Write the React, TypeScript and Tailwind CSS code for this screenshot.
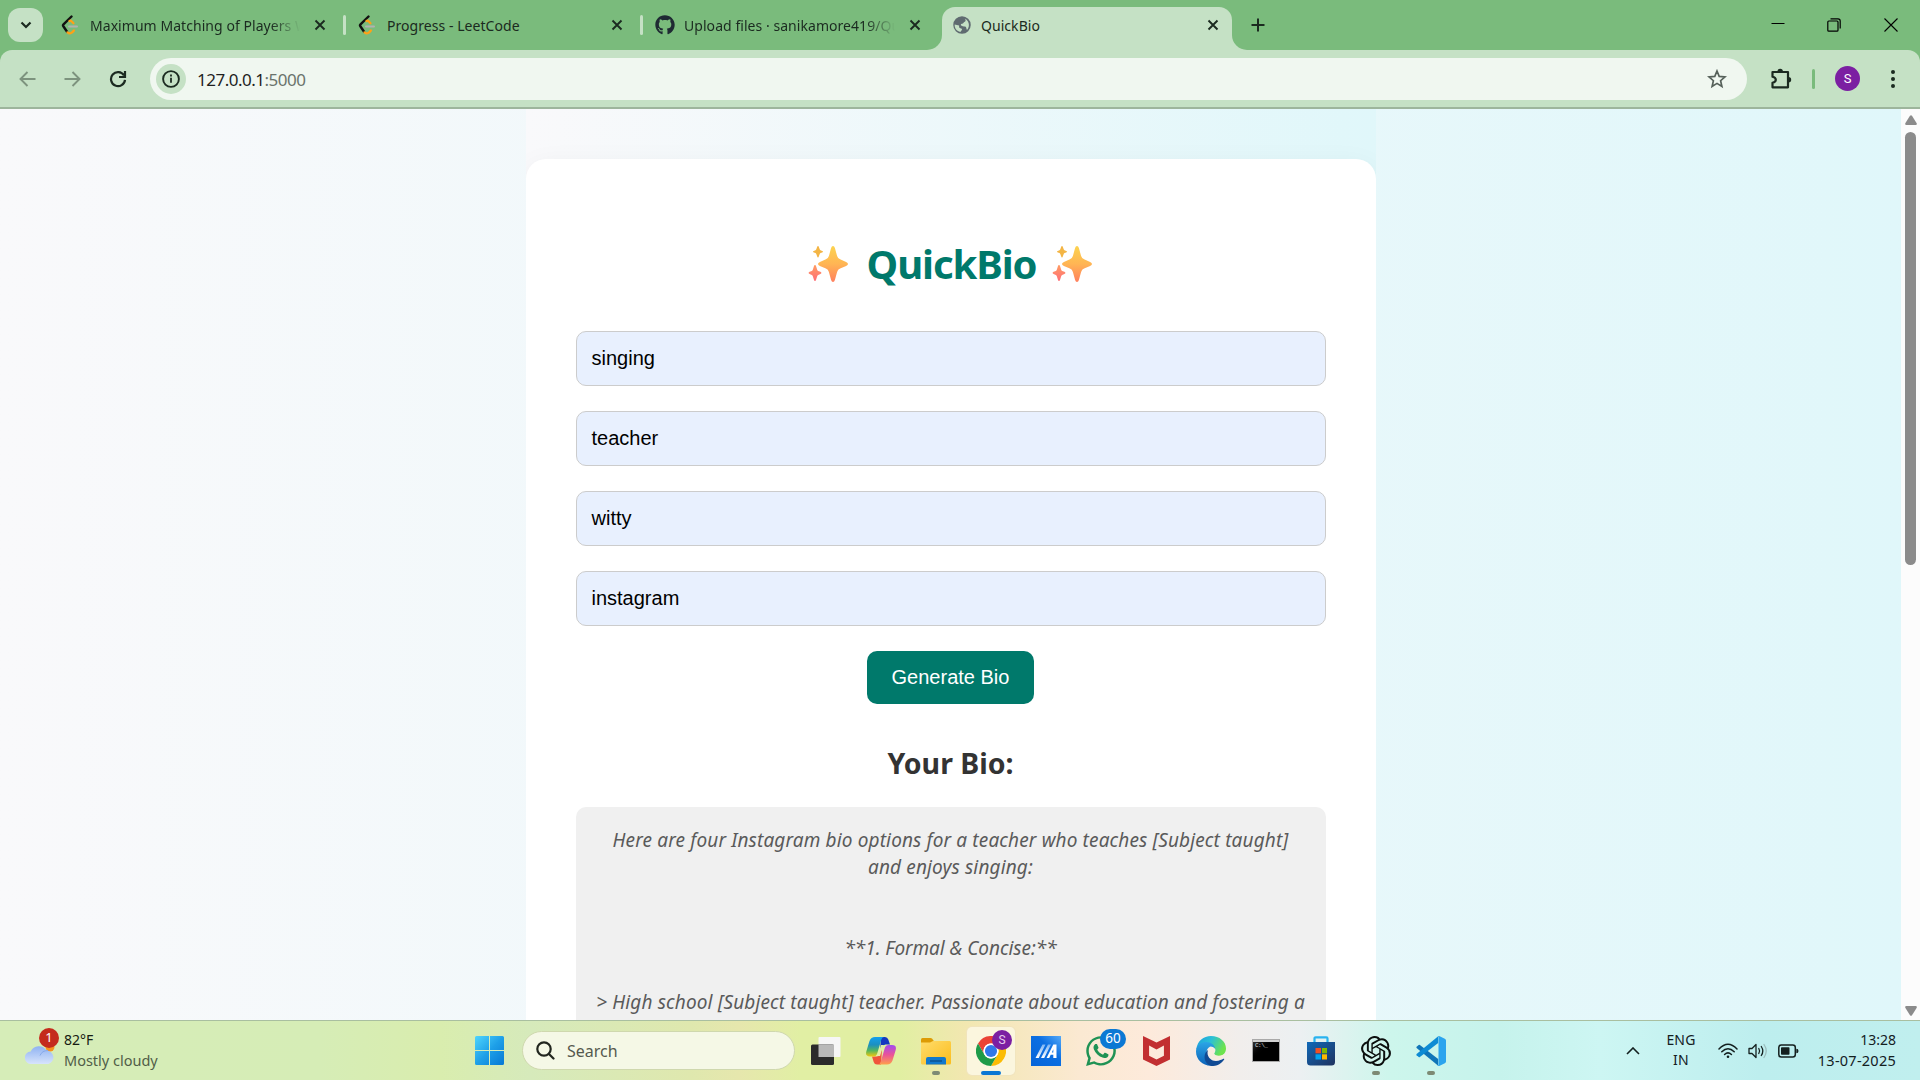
import React from "react";
import { FaGithub, FaWhatsapp } from "react-icons/fa";
import { SiOpenai } from "react-icons/si";

function LeetIcon() {
  return (
    <svg width="18" height="20" viewBox="0 0 18 20" fill="none" strokeLinecap="round" strokeLinejoin="round" className="-ml-[2px]">
      <path d="M10.5 1.5 2.5 9.3q-1 1 0 2.2l3.4 5" stroke="#111" strokeWidth="2.4" />
      <path d="M8.500 6q1-.7 2 .3l2 2" stroke="#ffa116" strokeWidth="2.2" />
      <path d="M6.500 17.300q3.200 2.800 6.400-1.800" stroke="#ffa116" strokeWidth="2.2" />
      <path d="M8 11.500h8" stroke="#b3b1b0" strokeWidth="2" />
    </svg>
  );
}

function Cross() {
  return (
    <svg width="12" height="12" viewBox="0 0 12 12" stroke="#1b2a20" strokeWidth="1.9" className="shrink-0">
      <path d="M1.500 1.500l9 9M10.500 1.500l-9 9" />
    </svg>
  );
}

function Globe() {
  return (
    <svg width="20" height="20" viewBox="0 0 24 24" fill="#5f6b70">
      <path d="M12 1.500a10.500 10.500 0 1 0 0 21 10.500 10.500 0 0 0 0-21zM10 20.300c-4.200-.9-7-4-6.800-8.800l5.300 1.100v2c1.100 1.800 3.500.8 3.500 3.200zm8-2.200c-1-1.700-.4-3.800-2.300-4.300-1.200-.4-4.500-.3-5-1.600-.5-2.300 2.300-1.100 3-2.500.3-1.500 1.600-1.200 2.300-2.200.8-1.200.1-2.500-.9-3.300 5 1.800 7.300 9.200 2.900 13.900z" />
    </svg>
  );
}

function Sparkles({ id }: { id: string }) {
  return (
    <svg width="41" height="38" viewBox="0 0 41 38">
      <defs>
        <linearGradient id={id} x1="0" y1="0" x2="0" y2="1">
          <stop offset="0" stopColor="#fcd34f" />
          <stop offset=".5" stopColor="#ffb554" />
          <stop offset="1" stopColor="#ff7f5e" />
        </linearGradient>
        <linearGradient id={id + "p"} x1="0" y1="0" x2="0" y2="1">
          <stop offset="0" stopColor="#ff9c62" />
          <stop offset="1" stopColor="#ff6f78" />
        </linearGradient>
      </defs>
      <path fill={`url(#${id})`} d="M25 1q1.300 0 1.900 2l2.200 8q.7 2.400 3 3.300l6 2.600q1.900.8 1.900 2t-1.900 2l-6 2.700q-2.300.9-3 3.300l-2.200 8q-.6 2.100-1.900 2.100t-1.900-2.100l-2.200-8q-.7-2.400-3-3.300l-6-2.700q-1.900-.8-1.900-2t1.900-2l6-2.600q2.300-.9 3-3.300l2.200-8q.6-2 1.900-2z" />
      <path fill="#f3b545" d="M10 1q.6 0 .8.800l.9 2.500q.2.700.8 1l1.700.7q.8.300.8.700t-.8.700l-1.700.7q-.6.300-.8 1l-.9 2.500q-.2.900-.8.900t-.8-.9l-.9-2.500q-.2-.7-.8-1l-1.700-.7Q5 7.100 5 6.700t.8-.7l1.700-.7q.6-.3.800-1l.9-2.500q.2-.8.8-.8z" />
      <path fill={`url(#${id}p)`} d="M7 20q.8 0 1 1l1.200 3.700q.2.800 1 1.200l2.200.9q1 .5 1 1.200t-1 1.100l-2.200.9q-.8.400-1 1.200L8 35q-.2 1-1 1t-1-1l-1.200-3.800q-.2-.8-1-1.200l-2.200-.9q-1-.4-1-1.100t1-1.200l2.200-.9q.8-.4 1-1.200L6 21q.2-1 1-1z" />
    </svg>
  );
}

function Tab({ icon, title, width, fade }: { icon: React.ReactNode; title: string; width: string; fade?: boolean }) {
  return (
    <div className={"flex items-center " + width}>
      <div className="flex w-[22px] shrink-0 justify-center">{icon}</div>
      <div
        className={
          "ml-[8px] min-w-0 flex-1 overflow-hidden whitespace-nowrap " +
          (fade ? "[mask-image:linear-gradient(to_right,black_86%,transparent)]" : "")
        }
      >
        {title}
      </div>
      <div className="ml-[14px] mr-[2px] flex shrink-0">
        <Cross />
      </div>
    </div>
  );
}

function TabStrip() {
  return (
    <div className="flex h-[50px] shrink-0 items-center bg-[#7abb7c] text-[14px] tracking-[0.05px] text-[#1b2a20]">
      <div className="ml-[8px] flex h-[34px] w-[35px] shrink-0 items-center justify-center rounded-[12px] bg-[#c5e1c5]">
        <svg width="12" height="8" viewBox="0 0 12 8" fill="none" stroke="#1b2a20" strokeWidth="2.2">
          <path d="M1.500 1.500L6 6l4.500-4.500" />
        </svg>
      </div>
      <div className="ml-[17px] flex">
        <Tab icon={<LeetIcon />} title="Maximum Matching of Players With" width="w-[268px]" fade />
      </div>
      <div className="ml-[15px] h-[20px] w-[3px] rounded bg-[#c5e1c5]" />
      <div className="ml-[11px] flex">
        <Tab icon={<LeetIcon />} title="Progress - LeetCode" width="w-[268px]" />
      </div>
      <div className="ml-[15px] h-[20px] w-[3px] rounded bg-[#c5e1c5]" />
      <div className="ml-[11px] flex">
        <Tab icon={<FaGithub size={20} color="#1f2a33" />} title="Upload files · sanikamore419/Quick" width="w-[269px]" fade />
      </div>
      <div className="ml-[4px] flex h-full items-end">
        <div className="h-[15px] w-[15px] bg-[#c5e1c5]">
          <div className="h-full w-full rounded-br-[15px] bg-[#7abb7c]" />
        </div>
        <div className="flex h-[43px] w-[290px] items-center rounded-t-[13px] bg-[#c5e1c5] pb-[7px] pl-[9px] pr-[11px]">
          <Tab icon={<Globe />} title="QuickBio" width="w-full" />
        </div>
        <div className="h-[15px] w-[15px] bg-[#c5e1c5]">
          <div className="h-full w-full rounded-bl-[15px] bg-[#7abb7c]" />
        </div>
      </div>
      <svg width="14" height="14" viewBox="0 0 14 14" stroke="#1b2a20" strokeWidth="2" className="ml-[4px]">
        <path d="M7 .5v13M.5 7h13" />
      </svg>
      <div className="ml-auto flex items-center pr-[22px] text-black">
        <svg width="14" height="14" viewBox="0 0 14 14" stroke="currentColor" className="mr-[42px]">
          <path d="M.5 5.500h13" />
        </svg>
        <svg width="14" height="14" viewBox="0 0 14 14" fill="none" stroke="currentColor" strokeWidth="1.200" className="mr-[43px]">
          <rect x=".8" y="3" width="10.200" height="10.200" rx="1" />
          <path d="M3.500 .8h7.500q2.200 0 2.200 2.200v7.500" />
        </svg>
        <svg width="14" height="14" viewBox="0 0 14 14" stroke="currentColor" strokeWidth="1.100">
          <path d="M.5.5l13 13M13.500.5l-13 13" />
        </svg>
      </div>
    </div>
  );
}

function Toolbar() {
  return (
    <div className="bg-[#7abb7c]">
      <div className="flex h-[59px] items-center rounded-t-[12px] border-b-2 border-[#9db59c] bg-[#c5e1c5] pl-[19px] pr-[24px]">
        <svg width="17" height="16" viewBox="0 0 17 16" fill="none" stroke="#7d937e" strokeWidth="1.900">
          <path d="M16.500 8H1.800M8.500 1L1.500 8l7 7" />
        </svg>
        <svg width="17" height="16" viewBox="0 0 17 16" fill="none" stroke="#7d937e" strokeWidth="1.900" className="ml-[28px]">
          <path d="M.5 8h14.700M8.500 1l7 7-7 7" />
        </svg>
        <svg width="18" height="18" viewBox="0 0 18 18" fill="none" stroke="#1b2a20" strokeWidth="2.200" className="ml-[28px]">
          <path d="M15 5.500A7 7 0 1 0 16 9.800" />
          <path d="M16 1v6h-6" />
        </svg>
        <div className="ml-[23px] flex h-[42px] w-[1597px] items-center rounded-full bg-[#f0f7f0] pl-[6px] pr-[20px]">
          <div className="flex h-[30px] w-[30px] items-center justify-center rounded-full bg-[#c5e1c5]">
            <svg width="18" height="18" viewBox="0 0 18 18" fill="none" stroke="#1b2a20" strokeWidth="1.900">
              <circle cx="9" cy="9" r="7.900" />
              <path d="M9 7.800v5M9 4.600v2" strokeWidth="1.800" />
            </svg>
          </div>
          <div className="ml-[11px] pt-[2px] text-[17px] tracking-[-0.5px] text-[#1f1f1f]">
            127.0.0.1<span className="text-[#6a736c]">:5000</span>
          </div>
          <svg width="20" height="20" viewBox="0 0 20 20" fill="none" stroke="#56615a" strokeWidth="1.700" className="ml-auto">
            <path d="M10 2l2.200 5.400 5.800.5-4.400 3.800 1.300 5.700L10 14.400l-4.900 3 1.300-5.700L2 7.900l5.800-.5z" />
          </svg>
        </div>
        <svg width="22" height="22" viewBox="0 0 22 22" className="ml-[23px]">
          <path d="M2.500 4h15.500v15.300H2.500v-4.600c4.400-1 4.400-5 0-6z" fill="none" stroke="#1b2a20" strokeWidth="2.200" strokeLinejoin="round" />
          <path d="M7.500 3.500a2.700 2.700 0 0 1 5.400 0zM18.500 9a2.700 2.700 0 0 1 0 5.400z" fill="#1b2a20" />
        </svg>
        <div className="ml-[20px] h-[20px] w-[3px] rounded bg-[#7abb7c]" />
        <div className="ml-[20px] flex h-[25px] w-[25px] items-center justify-center rounded-full bg-[#7b1fa2] font-[Roboto] text-[13px] text-white">S</div>
        <div className="ml-auto flex w-[6px] flex-col items-center gap-[3px]">
          <div className="h-[4px] w-[4px] rounded-full bg-[#1b2a20]" />
          <div className="h-[4px] w-[4px] rounded-full bg-[#1b2a20]" />
          <div className="h-[4px] w-[4px] rounded-full bg-[#1b2a20]" />
        </div>
      </div>
    </div>
  );
}

const fields = ["singing", "teacher", "witty", "instagram"];

function Page() {
  return (
    <div className="flex h-[911px] shrink-0 overflow-hidden">
      <div className="flex w-[1901px] justify-center bg-linear-to-r from-[#f9f9fb] to-[#e0f7fa]">
        <div className="h-[911px] w-[850px] overflow-hidden bg-linear-to-r from-[#f9f9fb] to-[#e0f7fa] pt-[50px]">
          <div className="flex h-[1200px] flex-col items-center rounded-t-[20px] bg-white px-[50px] pt-[76px] shadow-[0_8px_30px_rgba(0,0,0,0.06)]">
            <h1 className="flex h-[60px] items-center pb-[2px] text-[40px] font-bold tracking-[-1.1px] text-[#00796b]">
              <Sparkles id="sparkA" />
              <span className="ml-[18px] mr-[16px]">QuickBio</span>
              <Sparkles id="sparkB" />
            </h1>
            <div className="mt-[36px] flex w-full flex-col gap-[25px]">
              {fields.map((f) => (
                <div key={f} className="flex h-[55px] items-center rounded-[10px] border border-[#ccc] bg-[#e8f0fe] px-[15px] pb-[2px] font-['Liberation_Sans'] text-[20px] text-black">
                  {f}
                </div>
              ))}
            </div>
            <button className="mt-[25px] h-[53px] w-[167px] shrink-0 rounded-[10px] bg-[#00796b] pb-[2px] font-['Liberation_Sans'] text-[20px] text-white">Generate Bio</button>
            <h2 className="mt-[39px] h-[40px] shrink-0 text-[28.500px] leading-[40px] font-bold text-[#333]">Your Bio:</h2>
            <div className="mt-[24px] h-[400px] w-full shrink-0 rounded-[10px] bg-[#f0f0f0] pt-[20px] text-center text-[19px] leading-[27px] tracking-[0.14px] whitespace-nowrap text-[#5a5a5a] italic">
              <p>Here are four Instagram bio options for a teacher who teaches [Subject taught]</p>
              <p>and enjoys singing:</p>
              <p className="mt-[54px] tracking-[-0.05px]">**1. Formal &amp; Concise:**</p>
              <p className="mt-[27px]">&gt; High school [Subject taught] teacher. Passionate about education and fostering a</p>
            </div>
          </div>
        </div>
      </div>
      <div className="flex w-[19px] flex-col items-center bg-[#fcfcfc] pt-[6px] pb-[4px]">
        <svg width="12" height="10" viewBox="0 0 12 10" fill="#8b8b8b"><path d="M5 .8q1-1.200 2 0l4.700 7.500q.5 1.700-1 1.700H1.300q-1.500 0-1-1.700z" /></svg>
        <div className="mt-[7px] h-[433px] w-[11px] rounded-full bg-[#8b8b8b]" />
        <svg width="12" height="10" viewBox="0 0 12 10" fill="#8b8b8b" className="mt-auto"><path d="M5 9.200q1 1.200 2 0l4.700-7.500q.5-1.700-1-1.700H1.300q-1.500 0-1 1.700z" /></svg>
      </div>
    </div>
  );
}

function WinLogo() {
  return (
    <svg width="29" height="29" viewBox="0 0 29 29">
      <defs>
        <linearGradient id="win" x1="0" y1="0" x2="1" y2="1" gradientUnits="objectBoundingBox">
          <stop offset="0" stopColor="#4fd5fc" />
          <stop offset=".5" stopColor="#1ea0e8" />
          <stop offset="1" stopColor="#0678d4" />
        </linearGradient>
      </defs>
      <path fill="url(#win)" d="M1.500 0H14v14H0V1.500Q0 0 1.500 0zM15 0h12.500Q29 0 29 1.500V14H15zM0 15h14v14H1.500Q0 29 0 27.500zM15 15h14v12.500q0 1.500-1.500 1.500H15z" />
    </svg>
  );
}

function TaskView() {
  return (
    <svg width="30" height="30" viewBox="0 0 30 30">
      <rect x="7.500" y="1" width="22" height="20" rx="1" fill="#f6f6f6" />
      <rect x="0" y="8.500" width="23" height="20.500" rx="1.500" fill="#2b2b2b" />
      <path d="M7.500 8.500H23V21H7.500z" fill="#b9b9b9" />
    </svg>
  );
}

function Copilot() {
  return (
    <svg width="30" height="28" viewBox="0 0 30 28">
      <defs>
        <linearGradient id="cpA" x1="0" y1="0" x2="0" y2="1">
          <stop offset="0" stopColor="#12a0ee" />
          <stop offset=".4" stopColor="#1c8fc0" />
          <stop offset=".7" stopColor="#55b65c" />
          <stop offset="1" stopColor="#f2c80f" />
        </linearGradient>
        <linearGradient id="cpB" x1="0" y1="0" x2="0" y2="1">
          <stop offset="0" stopColor="#a24cf0" />
          <stop offset=".5" stopColor="#ea5398" />
          <stop offset="1" stopColor="#ffa04a" />
        </linearGradient>
      </defs>
      <path d="M15 0h4q2.500 0 3.300 2.500L24 7.500h-4.500q-2.500 0-3.300 2.500L14 14z" fill="#1438c0" />
      <path d="M15 27.500h-4q-2.500 0-3.300-2.500L6 19.500h4.500q2.500 0 3.300-2.500L16 12z" fill="#f0543a" />
      <path d="M9 0h9q-2 0-2.800 3l-4 13.500q-.9 3-3.700 3H4q-5 0-3.700-5L3.500 4Q5 0 9 0z" fill="url(#cpA)" />
      <path d="M21 27.500h-9q2 0 2.800-3l4-13.500q.9-3 3.700-3H26q5 0 3.700 5l-3.200 10.500q-1.500 4-5.500 4z" fill="url(#cpB)" />
      <path d="M15 8h3.300q-1.300.8-1.800 2.700l-2.400 8.300h-3.300q1.300-.9 1.800-2.700z" fill="#e3eda8" />
    </svg>
  );
}

function Folder() {
  return (
    <svg width="30" height="28" viewBox="0 0 30 28">
      <defs>
        <linearGradient id="fol" x1="0" y1="0" x2="1" y2="1">
          <stop offset="0" stopColor="#ffdc6b" />
          <stop offset="1" stopColor="#fbbd1d" />
        </linearGradient>
      </defs>
      <path d="M0 6V2.500Q0 1 1.500 1h8q1 0 1.700.8L13 4.300 10 7z" fill="#dd9b05" />
      <path d="M0 5.500h9L12 4h16.500Q30 4 30 5.500V26q0 1.500-1.500 1.500h-27Q0 27.500 0 26z" fill="url(#fol)" />
      <path d="M5 27.500V22q0-2 2-2h16q2 0 2 2v5.500z" fill="#1279cc" />
      <path d="M9 24h12" stroke="#0a4c8a" strokeWidth="1.300" />
    </svg>
  );
}

function Chrome() {
  return (
    <svg width="30" height="30" viewBox="0 0 48 48">
      <circle cx="24" cy="24" r="24" fill="#fff" />
      <path d="M3.200 12A24 24 0 0 1 44.800 12H24a12 12 0 0 0-10.400 18z" fill="#ea4335" />
      <path d="M44.800 12A24 24 0 0 1 24 48l10.400-18A12 12 0 0 0 24 12z" fill="#fbbc04" />
      <path d="M24 48A24 24 0 0 1 3.200 12l10.400 18a12 12 0 0 0 20.800 0z" fill="#1e9b48" />
      <circle cx="24" cy="24" r="12" fill="#fff" />
      <circle cx="24" cy="24" r="9.700" fill="#2f78ea" />
    </svg>
  );
}

function MyAsus() {
  return (
    <svg width="30" height="30" viewBox="0 0 30 30">
      <defs>
        <linearGradient id="asus" x1="0" y1="1" x2="1" y2="0">
          <stop offset="0" stopColor="#0664d8" />
          <stop offset=".6" stopColor="#0b6fe2" />
          <stop offset="1" stopColor="#55aaf8" />
        </linearGradient>
        <linearGradient id="slash" x1="0" y1="1" x2="0" y2="0">
          <stop offset="0" stopColor="#fff" />
          <stop offset="1" stopColor="#7db4f3" />
        </linearGradient>
      </defs>
      <path d="M0 0h30v30H0z" fill="url(#asus)" />
      <path d="M4.500 22L11.500 8.500h3L7.700 22zM10 22l7-13.500h3L13.200 22z" fill="url(#slash)" />
      <path d="M15.500 22L22.300 8.500h3.200V22h-3.200v-3.200h-2.600L18.200 22zM20.800 16.400h1.500v-3.200z" fill="#fff" />
    </svg>
  );
}

function McAfee() {
  return (
    <svg width="27" height="30" viewBox="0 0 28 30" preserveAspectRatio="none">
      <path d="M0 0l14 6.500L28 0v23.500L14 30 0 23.500zM6.300 9.500v10.200L14 23.500l7.700-3.800V9.500L14 13.500z" fill="#c22f31" fillRule="evenodd" />
    </svg>
  );
}

function Edge() {
  return (
    <svg width="30" height="30" viewBox="0 0 30 30">
      <defs>
        <linearGradient id="edA" x1="0" y1="0" x2="1" y2=".4">
          <stop offset="0" stopColor="#1a9de0" />
          <stop offset=".5" stopColor="#2cc0d6" />
          <stop offset="1" stopColor="#6de34e" />
        </linearGradient>
        <linearGradient id="edB" x1="0" y1="0" x2="0" y2="1">
          <stop offset="0" stopColor="#2ba5e6" />
          <stop offset="1" stopColor="#0c62b8" />
        </linearGradient>
      </defs>
      <path d="M.3 13C1.500 5 7.500 0 15 0c8.500 0 15 5.500 15 12.500 0 4.500-3 7.500-7.500 7.500-3.500 0-5-1.500-4-3 2.500-4-.5-7-5-7C7 10 2 14 .3 13z" fill="url(#edA)" />
      <path d="M0 15.500C0 10 4.500 6 10 6c5 0 9 3 9 7-1-2-3.500-3-5.500-2-3 1.500-4.500 7-1 12 2 3 5 5.500 7.500 6C9 32 0 25 0 15.500z" fill="url(#edB)" />
      <path d="M12 14c-2 6 2.500 11 8 11 3.500 0 6-1.500 7.300-2.200.8-.3 1.200.3.700 1C25.500 27.500 21.500 30 17 30 9 30 5.500 19 12 14z" fill="#104a94" />
      <path d="M15 11.500c2.500-.5 4.300 1.300 4 3.300-.2 1.500-1.300 2-.9 3 .6 1.300 2.400 2 4.700 2 2.200 0 4-.6 5.700-2-.6 2-1.500 3.700-2.600 4.700-6 3.200-12.700.3-13.200-6-.1-2.500.8-4.500 2.300-5z" fill="#f9ece0" />
    </svg>
  );
}

function Cmd() {
  return (
    <div className="flex h-[23px] w-[28px] flex-col border border-[#a9a9a9] bg-linear-to-br from-[#3a3a3a] to-black to-50%">
      <div className="h-[2px] shrink-0 bg-[#d0d0d0]" />
      <div className="pl-[2px] font-['Liberation_Mono'] text-[6px] leading-[8px] tracking-[-0.5px] text-[#ddd]">C:\_</div>
    </div>
  );
}

function Store() {
  return (
    <svg width="30" height="30" viewBox="0 0 30 30">
      <defs>
        <linearGradient id="sto" x1="0" y1="0" x2="1" y2="1">
          <stop offset="0" stopColor="#0f69b8" />
          <stop offset="1" stopColor="#20325f" />
        </linearGradient>
      </defs>
      <path d="M8.500 8V2.500q0-1.200 1.200-1.200h10.600q1.200 0 1.200 1.200V8" fill="none" stroke="#28b3ef" strokeWidth="2.200" />
      <path d="M1 6h28v20q0 3.500-3.500 3.500h-21Q1 29.500 1 26z" fill="url(#sto)" />
      <path d="M9.500 12H15v5.300H9.500z" fill="#f25022" />
      <path d="M16 12h5v5.300h-5z" fill="#7fba00" />
      <path d="M9.500 18.300H15v5.200H9.500z" fill="#00a4ef" />
      <path d="M16 18.300h5v5.200h-5z" fill="#ffb900" />
    </svg>
  );
}

function VsCode() {
  return (
    <svg width="30" height="30" viewBox="0 0 100 100">
      <path d="M2 36l7-6q2-1.500 4 0l61 47v22L2 40q-2-2 0-4z" fill="#1075b8" />
      <path d="M2 64l7 6q2 1.500 4 0l61-47V1L2 60q-2 2 0 4z" fill="#0d8bd4" />
      <path d="M70 99q5 2 9 0l17-8q4-2 4-6V15q0-4-4-6L79 1q-5-2-9 1 5-3 5 3v90q0 6-5 4z" fill="#2ba4ee" />
    </svg>
  );
}

function DockItem({ children, running, active }: { children: React.ReactNode; running?: boolean; active?: boolean }) {
  return (
    <div
      className={
        "relative flex h-[48px] w-[48px] shrink-0 items-center justify-center rounded-[5px] " +
        (active ? "bg-[#fbf6de] shadow-[0_0_0_1px_rgba(240,228,190,0.8)]" : "")
      }
    >
      {children}
      {running && <div className="absolute bottom-0 left-[20px] h-[4px] w-[8px] rounded-full bg-[#7d8a74]" />}
      {active && <div className="absolute bottom-0 left-[14px] h-[4px] w-[20px] rounded-full bg-[#0b78d4]" />}
    </div>
  );
}

function Taskbar() {
  return (
    <div className="flex h-[60px] shrink-0 items-center border-t border-[#a9bfa0] bg-[linear-gradient(90deg,#d6edb8_0px,#d6edb6_320px,#d9edae_440px,#d6eabb_530px,#dfe8ae_690px,#e6e7ad_740px,#e1efa4_800px,#e1efa2_900px,#f2e7b0_965px,#fbe9d2_1080px,#fdeadb_1150px,#f1eeec_1240px,#ecf0f2_1300px,#cdf6ec_1390px,#c6f3ec_1500px,#cdf6f3_1600px,#bdeeee_1760px,#c0efee_1920px)]">
      <div className="flex w-[465px] shrink-0 items-center pl-[25px]">
        <div className="relative h-[44px] w-[36px] shrink-0">
          <svg width="31" height="21" viewBox="0 0 31 21" className="absolute top-[15px] left-0">
            <defs>
              <linearGradient id="cld" x1="0" y1="0" x2="0" y2="1">
                <stop offset="0" stopColor="#8fb2f2" />
                <stop offset="1" stopColor="#d7e4fb" />
              </linearGradient>
            </defs>
            <circle cx="25" cy="3" r="4.500" fill="#f7931e" />
            <path d="M6.500 20a6.300 6.300 0 0 1-.8-12.600A9 9 0 0 1 21.500 6.500a6.900 6.900 0 0 1 2 13.500z" fill="url(#cld)" />
            <path d="M15 11.500q2-5 8-5" stroke="#86a9ea" strokeWidth="1" fill="none" />
          </svg>
          <div className="absolute -top-[1px] left-[14px] flex h-[20px] w-[20px] items-center justify-center rounded-full bg-[#c42b1c] text-[13px] text-white">1</div>
        </div>
        <div className="ml-[3px] pb-[2px] text-[14px] leading-[20px] text-[#161b12]">
          <div>82°F</div>
          <div className="text-[14.500px] text-[#515d48]">Mostly cloudy</div>
        </div>
      </div>
      <DockItem><WinLogo /></DockItem>
      <div className="ml-[9px] mr-[7px] flex h-[39px] w-[273px] shrink-0 items-center rounded-full border border-[#cfd8ae] bg-[#f5f8e6] pl-[13px]">
        <svg width="19" height="19" viewBox="0 0 19 19" fill="none" stroke="#22261f" strokeWidth="2.200" strokeLinecap="round">
          <circle cx="8" cy="8" r="6.700" />
          <path d="M13 13l4.500 4.500" />
        </svg>
        <div className="ml-[12px] text-[16px] text-[#55594e]">Search</div>
      </div>
      <div className="flex shrink-0 gap-[7px]">
        <DockItem><TaskView /></DockItem>
        <DockItem><Copilot /></DockItem>
        <DockItem running><Folder /></DockItem>
        <DockItem active>
          <Chrome />
          <div className="absolute top-[3px] left-[25px] flex h-[20px] w-[20px] items-center justify-center rounded-full bg-[#7b1fa2] font-[Roboto] text-[12px] text-[#e6cdee]">S</div>
        </DockItem>
        <DockItem><MyAsus /></DockItem>
        <DockItem>
          <FaWhatsapp size={34} color="#1f9254" />
          <div className="absolute top-[2px] left-[23px] flex h-[20px] w-[26px] items-center justify-center rounded-full bg-[#0b78d4] text-[13.500px] text-white">60</div>
        </DockItem>
        <DockItem><McAfee /></DockItem>
        <DockItem><Edge /></DockItem>
        <DockItem><Cmd /></DockItem>
        <DockItem><Store /></DockItem>
        <DockItem running><SiOpenai size={30} color="#0c0f0e" /></DockItem>
        <DockItem running><VsCode /></DockItem>
      </div>
      <div className="ml-auto flex items-center pr-[24px] text-[14px] leading-[20px] text-[#14201f]">
        <svg width="14" height="8" viewBox="0 0 14 8" fill="none" stroke="#14201f" strokeWidth="1.600">
          <path d="M1 7l6-6 6 6" />
        </svg>
        <div className="ml-[26px] w-[30px] pb-px text-center tracking-[0.2px]">
          <div>ENG</div>
          <div>IN</div>
        </div>
        <svg width="20" height="16" viewBox="0 0 20 16" fill="none" stroke="#14201f" strokeWidth="1.500" strokeLinecap="round" className="ml-[22px]">
          <path d="M1 6q9-9.500 18 0M3.800 8.800q6.200-6.300 12.400 0M6.600 11.500q3.400-3.300 6.800 0" />
          <circle cx="10" cy="13.700" r="1.300" fill="#14201f" stroke="none" />
        </svg>
        <svg width="20" height="16" viewBox="0 0 20 16" fill="none" stroke="#14201f" strokeWidth="1.300" strokeLinecap="round" strokeLinejoin="round" className="ml-[10px]">
          <path d="M1 5.500h3l4-4v13l-4-4H1zM10.800 5.500q1.600 2.500 0 5M13.300 3.500q3 4.500 0 9" />
          <path d="M16 1.500q4.500 6.500 0 13" stroke="#9cbdbd" />
        </svg>
        <svg width="21" height="14" viewBox="0 0 21 14" className="ml-[10px]">
          <rect x=".8" y="1" width="16.500" height="12" rx="2.500" fill="none" stroke="#14201f" strokeWidth="1.500" />
          <rect x="3" y="3.200" width="8.500" height="7.600" rx=".8" fill="#14201f" />
          <path d="M18.300 4.800q2.200 0 2.200 2.200t-2.200 2.200z" fill="#14201f" />
        </svg>
        <div className="ml-[19px] w-[78px] pb-px text-right whitespace-nowrap">
          <div>13:28</div>
          <div className="-ml-[4px] text-[14.500px] tracking-[0.25px]">13-07-2025</div>
        </div>
      </div>
    </div>
  );
}

export default function App() {
  return (
    <div className="flex h-[1080px] w-[1920px] flex-col overflow-hidden bg-white font-['Noto_Sans',sans-serif]">
      <TabStrip />
      <Toolbar />
      <Page />
      <Taskbar />
    </div>
  );
}
